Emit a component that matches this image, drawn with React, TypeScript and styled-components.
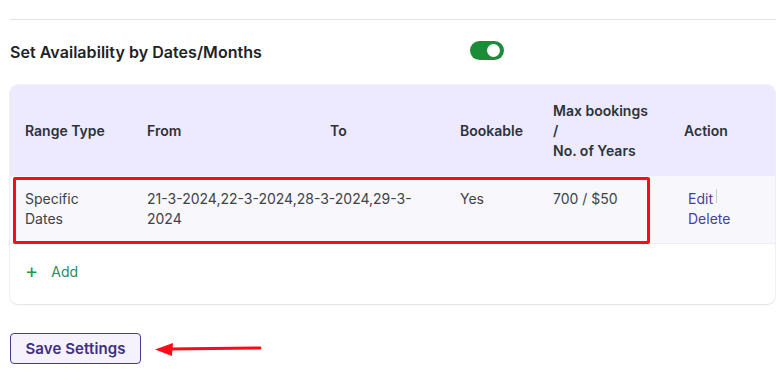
import React from "react";
import styled, { createGlobalStyle } from "styled-components";

const Global = createGlobalStyle`
  html, body { margin: 0; padding: 0; background: #ffffff; }
  body { font-family: Inter, "Noto Sans", "Liberation Sans", sans-serif; -webkit-font-smoothing: antialiased; }
  * { box-sizing: border-box; }
`;

const Page = styled.div`
  padding: 19px 0 0 10px;
  width: 776px;
`;

const Divider = styled.hr`
  margin: 0;
  border: 0;
  border-top: 1px solid #e4e4e7;
`;

const TitleRow = styled.div`
  display: grid;
  grid-template-columns: 460px auto;
  align-items: center;
  height: 64px;
  padding-bottom: 1px;
`;

const Title = styled.h2`
  margin: 0;
  font-size: 16px;
  font-weight: 600;
  color: #1d2327;
  letter-spacing: 0.05px;
`;

const Toggle = styled.span<{ on: boolean }>`
  position: relative;
  display: inline-block;
  width: 34px;
  height: 19px;
  margin-top: -2px;
  border-radius: 10px;
  background: ${(p) => (p.on ? "#1b8c37" : "#c3c4c7")};
  &::after {
    content: "";
    position: absolute;
    top: 3px;
    left: ${(p) => (p.on ? "17px" : "3px")};
    width: 13px;
    height: 13px;
    border-radius: 50%;
    background: #fff;
  }
`;

const Card = styled.div`
  margin-top: 1px;
  margin-right: 1px;
  border-radius: 8px;
  background: #fff;
  box-shadow: 0 1px 2px rgba(0, 0, 0, 0.07), 0 0 0 1px #f3f3f5;
`;

const cols = "122px 183px 130px 93px 131px 1fr";

const HeadRow = styled.div`
  display: grid;
  grid-template-columns: ${cols};
  align-items: center;
  background: #ede9fe;
  border-radius: 8px 8px 0 0;
  height: 91px;
`;

const HeadCell = styled.div`
  padding: 0 15px;
  font-size: 14px;
  font-weight: 600;
  line-height: 20px;
  color: #2c3338;
`;

const BodyRow = styled.div`
  position: relative;
  display: grid;
  grid-template-columns: ${cols};
  align-items: start;
  background: #f8f7fc;
  border-bottom: 1px solid #eeeef2;
  height: 68px;
`;

const Cell = styled.div<{ span?: number }>`
  grid-column: span ${(p) => p.span ?? 1};
  padding: 13px 15px;
  font-size: 14px;
  line-height: 20px;
  color: #3c434a;
  overflow-wrap: break-word;
`;

const ActionCell = styled(Cell)`
  padding-left: 19px;
`;

const ActionLink = styled.a`
  color: #4b3d9e;
  text-decoration: none;
  font-size: 14px;
`;

const Sep = styled.span`
  display: inline-block;
  width: 1px;
  height: 14px;
  margin-left: 3px;
  vertical-align: 1px;
  background: #c9c9d0;
`;

const Highlight = styled.div`
  position: absolute;
  left: 3px;
  top: 1px;
  width: 637px;
  height: 67px;
  border: 3px solid #ff0a16;
  border-radius: 2px;
  pointer-events: none;
`;

const AddRow = styled.div`
  display: flex;
  align-items: center;
  gap: 13px;
  height: 60px;
  padding: 0 0 5px 15px;
  font-size: 14px;
  color: #2a8a5f;
`;

const Plus = styled.span`
  font-size: 20px;
  font-weight: 400;
  color: #1f9a45;
  line-height: 1;
  margin-top: -2px;
`;

const Footer = styled.div`
  display: flex;
  align-items: center;
  gap: 13px;
  margin-top: 29px;
`;

const SaveButton = styled.button`
  width: 131px;
  height: 31px;
  padding: 0;
  border: 1px solid #4a3a94;
  border-radius: 4px;
  background: #f5f2fe;
  color: #3d2f82;
  font-family: inherit;
  font-size: 15px;
  font-weight: 600;
  letter-spacing: 0.1px;
`;

const Arrow = () => (
  <svg width="108" height="14" viewBox="0 0 108 14">
    <line x1="14" y1="7" x2="106" y2="6" stroke="#ff0a16" strokeWidth="3" strokeLinecap="round" />
    <polygon points="1,7.5 19,1 18,14" fill="#ff0a16" />
  </svg>
);

export default function App() {
  return (
    <Page>
      <Global />
      <Divider />
      <TitleRow>
        <Title>Set Availability by Dates/Months</Title>
        <Toggle on />
      </TitleRow>
      <Card>
        <HeadRow>
          <HeadCell>Range Type</HeadCell>
          <HeadCell>From</HeadCell>
          <HeadCell>To</HeadCell>
          <HeadCell>Bookable</HeadCell>
          <HeadCell>
            Max bookings
            <br />/
            <br />
            No. of Years
          </HeadCell>
          <HeadCell>Action</HeadCell>
        </HeadRow>
        <BodyRow>
          <Cell>Specific Dates</Cell>
          <Cell span={2}>21-3-2024,22-3-2024,28-3-2024,29-3-2024</Cell>
          <Cell>Yes</Cell>
          <Cell>700 / $50</Cell>
          <ActionCell>
            <ActionLink href="#">Edit</ActionLink>
            <Sep />
            <br />
            <ActionLink href="#">Delete</ActionLink>
          </ActionCell>
          <Highlight />
        </BodyRow>
        <AddRow>
          <Plus>+</Plus>
          <span>Add</span>
        </AddRow>
      </Card>
      <Footer>
        <SaveButton>Save Settings</SaveButton>
        <Arrow />
      </Footer>
    </Page>
  );
}
